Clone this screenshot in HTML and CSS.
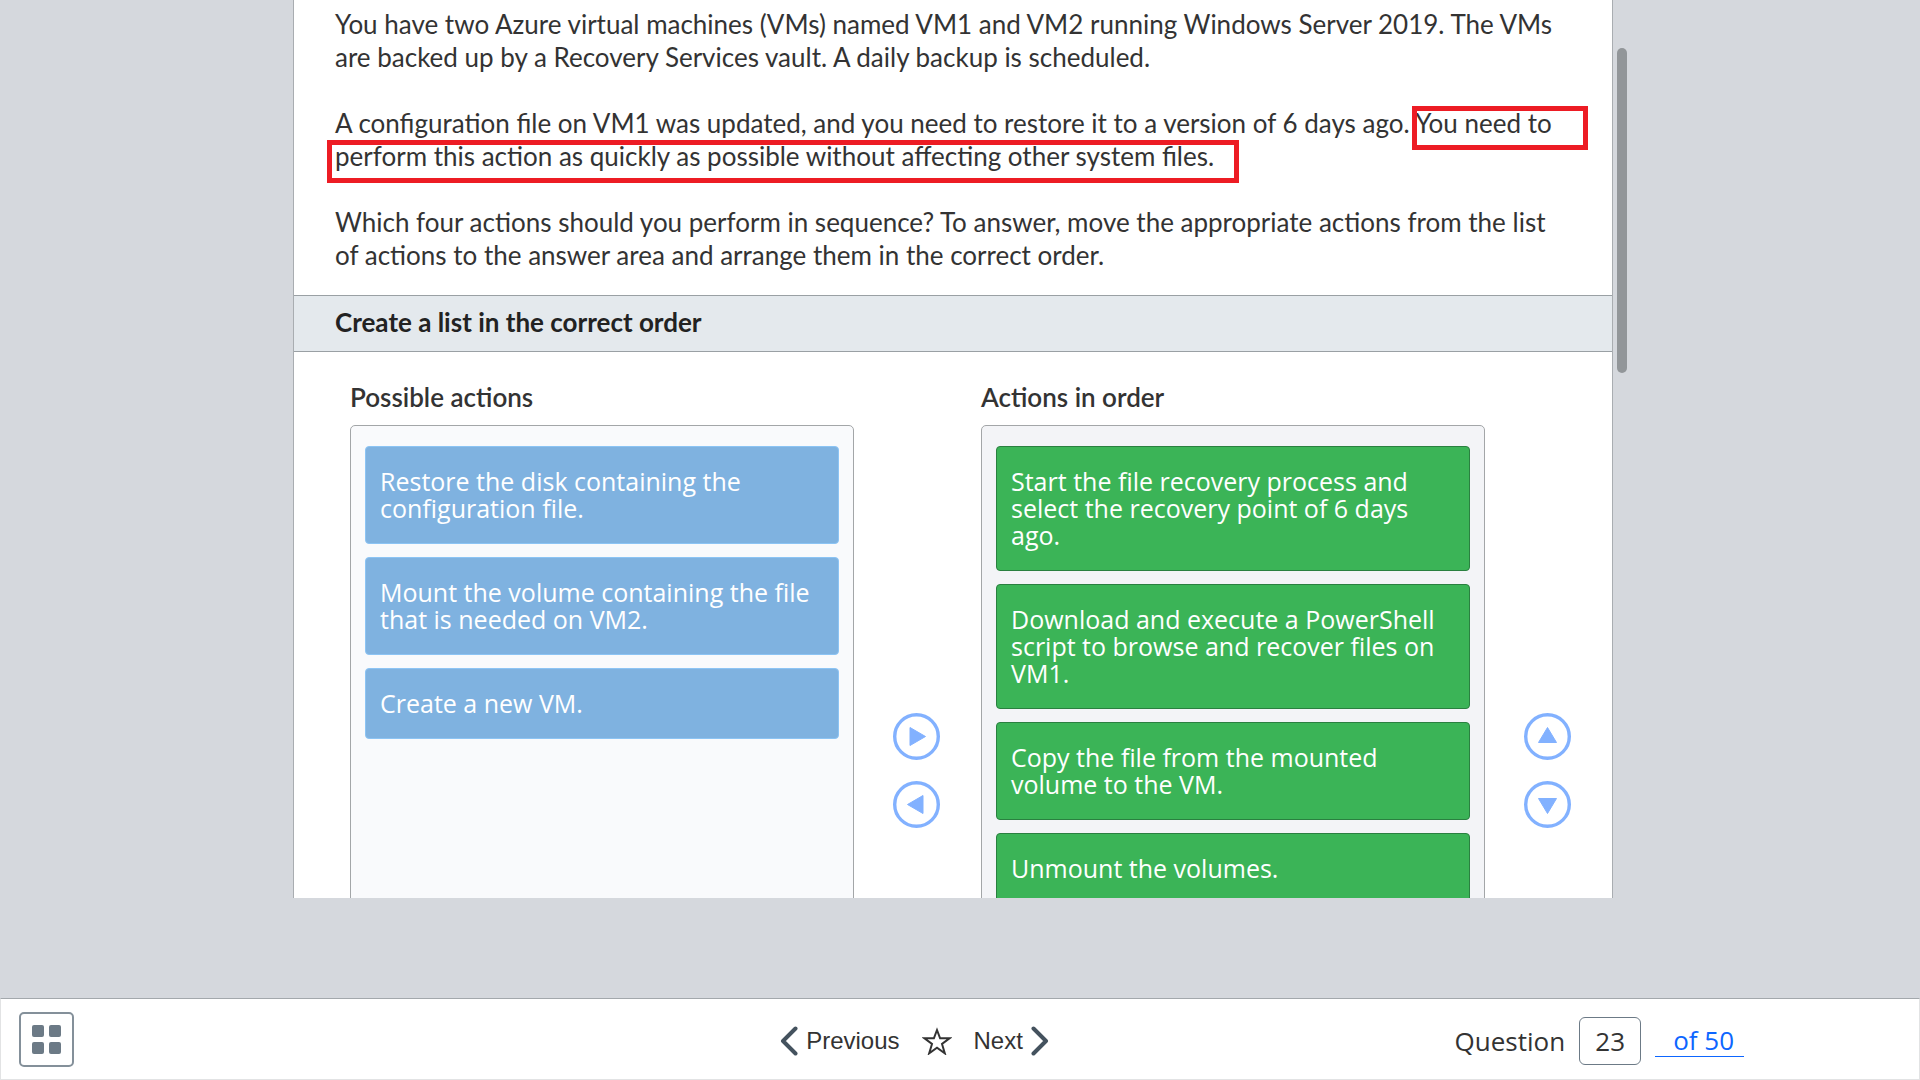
FILE: index.html
```html
<!DOCTYPE html>
<html lang="en">
<head>
<meta charset="utf-8">
<title>Question 23 of 50</title>
<link rel="stylesheet" href="styles.css">
</head>
<body>
<main class="stage">
  <div class="viewer">
    <article class="panel">
      <section class="prompt">
        <p>You have two Azure virtual machines (VMs) named VM1 and VM2 running Windows Server 2019. The VMs<br>are backed up by a Recovery Services vault. A daily backup is scheduled.</p>
        <p>A configuration file on VM1 was updated, and you need to restore it to a version of 6 days ago. You need to<br>perform this action as quickly as possible without affecting other system files.</p>
        <p>Which four actions should you perform in sequence? To answer, move the appropriate actions from the list<br>of actions to the answer area and arrange them in the correct order.</p>
        <span class="mark mark-start"></span>
        <span class="mark mark-end"></span>
      </section>
      <h2 class="bar">Create a list in the correct order</h2>
      <section class="board">
        <div class="column">
          <h3>Possible actions</h3>
          <div class="list">
            <button class="card" type="button">Restore the disk containing the configuration file.</button>
            <button class="card" type="button">Mount the volume containing the file that is needed on VM2.</button>
            <button class="card" type="button">Create a new VM.</button>
          </div>
        </div>
        <div class="controls">
          <button class="round" type="button" aria-label="Add action"><svg viewBox="0 0 47 47"><circle cx="23.5" cy="23.5" r="21.8"/><path d="M17 14.5v18L32.5 23.5z"/></svg></button>
          <button class="round" type="button" aria-label="Remove action"><svg viewBox="0 0 47 47"><circle cx="23.5" cy="23.5" r="21.8"/><path d="M30 14.5v18L14.5 23.5z"/></svg></button>
        </div>
        <div class="column">
          <h3>Actions in order</h3>
          <div class="list list-answer">
            <button class="card card-done" type="button">Start the file recovery process and select the recovery point of 6 days ago.</button>
            <button class="card card-done" type="button">Download and execute a PowerShell script to browse and recover files on VM1.</button>
            <button class="card card-done" type="button">Copy the file from the mounted volume to the VM.</button>
            <button class="card card-done" type="button">Unmount the volumes.</button>
          </div>
        </div>
        <div class="controls">
          <button class="round" type="button" aria-label="Move up"><svg viewBox="0 0 47 47"><circle cx="23.5" cy="23.5" r="21.8"/><path d="M14.5 29.5h18L23.5 14.5z"/></svg></button>
          <button class="round" type="button" aria-label="Move down"><svg viewBox="0 0 47 47"><circle cx="23.5" cy="23.5" r="21.8"/><path d="M14.5 17.5h18L23.5 32.5z"/></svg></button>
        </div>
      </section>
    </article>
    <div class="track"><div class="thumb"></div></div>
  </div>
</main>
<footer class="footer">
  <div class="side">
    <button class="grid-button" type="button" aria-label="All questions"><i></i><i></i><i></i><i></i></button>
  </div>
  <nav class="pager">
    <button class="step" type="button"><svg class="chevron" viewBox="0 0 18 30"><path d="M15.5 2.5L3 15l12.5 12.5"/></svg>Previous</button>
    <button class="step" type="button" aria-label="Bookmark"><svg class="star" viewBox="0 0 30 28"><path d="M15 3l3.1 8.3h9.4l-7.5 5.7 2.8 9.3-7.800-5.600-7.800 5.600 2.800-9.300-7.500-5.700h9.400z"/></svg></button>
    <button class="step" type="button">Next<svg class="chevron" viewBox="0 0 18 30"><path d="M2.5 2.5L15 15 2.5 27.5"/></svg></button>
  </nav>
  <div class="side jump">
    <label for="question">Question</label>
    <input id="question" type="text" value="23">
    <a href="#all">of 50</a>
  </div>
</footer>
</body>
</html>
```
FILE: styles.css
```css
* {
  box-sizing: border-box;
}

body {
  margin: 0;
  height: 100vh;
  display: flex;
  flex-direction: column;
  overflow: hidden;
  background: #d5d8dd;
  color: #333;
  font-family: "Open Sans", "Noto Sans", sans-serif;
}

button {
  margin: 0;
  padding: 0;
  border: 0;
  background: none;
  color: inherit;
  cursor: pointer;
}

.stage {
  flex: 1;
  min-height: 0;
  padding-bottom: 100px;
  display: flex;
  justify-content: center;
}

.viewer {
  width: 100%;
  max-width: 1334px;
  display: flex;
}

.panel {
  flex: 1;
  overflow: hidden;
  background: #fff;
  border: solid #a9adb1;
  border-width: 0 1px;
}

/* Question text */
.prompt {
  position: relative;
  padding: 8px 41px 23px;
  font: 26px/33px Lato, sans-serif;
  white-space: nowrap;
}

.prompt p {
  margin: 0 0 33px;
}

.prompt p:last-of-type {
  margin-bottom: 0;
}

.mark {
  position: absolute;
  border: 5px solid #ed1c24;
}

.mark-start {
  top: 106px;
  left: 1118px;
  width: 176px;
  height: 44px;
}

.mark-end {
  top: 140px;
  left: 33px;
  width: 912px;
  height: 43px;
}

.bar {
  margin: 0;
  padding: 10px 41px 12px;
  border: solid #9aa0a4;
  border-width: 1px 0;
  background: #e4e9ed;
  color: #222;
  font: 700 26px/33px Lato, sans-serif;
}

/* Ordering exercise */
.board {
  display: flex;
  padding-left: 56px;
}

.column {
  flex: 1;
}

.column h3 {
  margin: 29px 0 11px;
  font: 600 26px/33px Lato, sans-serif;
}

.list {
  min-height: 700px;
  padding: 20px 14px;
  display: flex;
  flex-direction: column;
  gap: 13px;
  border: 1px solid #a3a6a8;
  border-radius: 5px;
  background: #f9fafc;
}

.list-answer {
  background: #f3f4f7;
}

.card {
  padding: 21px 14px;
  border: 1px solid #8cc4f4;
  border-radius: 4px;
  background: #7fb2e0;
  color: #fff;
  font: 25px/27px "Open Sans", "Noto Sans", sans-serif;
  text-align: left;
}

.card-done {
  border-color: #2a8040;
  background: #3bb457;
}

.controls {
  width: 127px;
  padding: 361px 41px 0 39px;
  display: flex;
  flex-direction: column;
  gap: 21px;
}

.round,
.round svg {
  display: block;
  width: 47px;
  height: 47px;
}

.round circle {
  fill: none;
  stroke: #82b1ff;
  stroke-width: 3.4;
}

.round path {
  fill: #82b1ff;
  stroke: #82b1ff;
  stroke-linejoin: round;
}

.track {
  width: 14px;
  padding: 48px 0 0 4px;
}

.thumb {
  height: 325px;
  border-radius: 5px;
  background: #929699;
}

/* Navigation footer */
.footer {
  height: 82px;
  padding: 0 109px 0 18px;
  display: flex;
  align-items: center;
  border: 1px solid #e2e3e4;
  border-top-color: #a3a8ac;
  background: #fff;
}

.side {
  flex: 1;
}

.grid-button {
  width: 55px;
  height: 55px;
  display: grid;
  grid-template-columns: 12px 12px;
  grid-template-rows: 12px 12px;
  place-content: center;
  gap: 5px;
  border: 2px solid #84909a;
  border-radius: 5px;
}

.grid-button i {
  border-radius: 2px;
  background: #6c7a86;
}

.pager {
  padding-top: 3px;
  display: flex;
  align-items: center;
  gap: 22px;
}

.step {
  display: flex;
  align-items: center;
  gap: 8px;
  font: 24px/30px "Liberation Sans", sans-serif;
}

.chevron {
  width: 18px;
  height: 30px;
  fill: none;
  stroke: #44525e;
  stroke-width: 4;
  stroke-linecap: round;
  stroke-linejoin: round;
}

.star {
  width: 30px;
  height: 28px;
  fill: none;
  stroke: #333;
  stroke-width: 2;
}

.jump {
  padding-top: 3px;
  display: flex;
  align-items: center;
  justify-content: flex-end;
  gap: 14px;
  font-size: 26px;
  line-height: 32px;
}

.jump input {
  width: 62px;
  height: 48px;
  padding: 0;
  border: 1px solid #6c7a86;
  border-radius: 6px;
  background: #fff;
  color: #333;
  font: inherit;
  text-align: center;
}

.jump a {
  margin-right: 66px;
  padding: 0 10px 0 18px;
  border-bottom: 1px solid #0d66ff;
  color: #0d66ff;
  text-decoration: none;
}
```
